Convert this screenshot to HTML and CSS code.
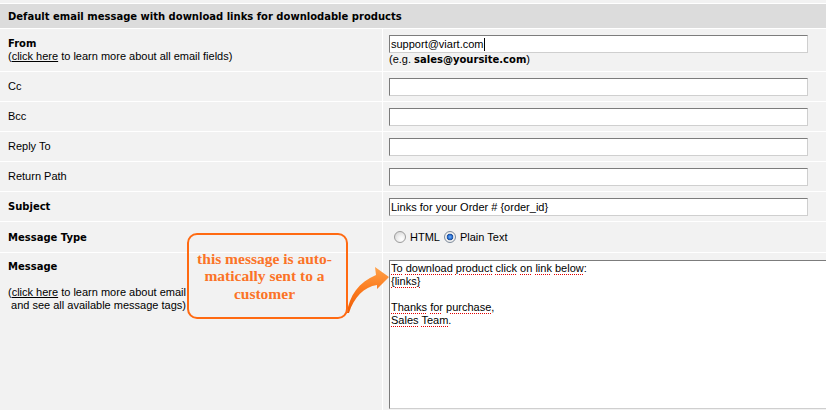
FILE: index.html
```html
<!DOCTYPE html>
<html>
<head>
<meta charset="utf-8">
<title>Download links email</title>
<link rel="stylesheet" href="styles.css">
</head>
<body>
<div class="page">
  <div class="form">
    <div class="strip"></div>
    <div class="head">Default email message with download links for downlodable products</div>

    <div class="lbl"><div><b>From</b><br>(<a href="#">click here</a> to learn more about all email fields)</div></div>
    <div class="val from">
      <div>
        <div class="field">support@viart.com<span class="caret"></span></div>
        <div class="hint">(e.g. <b>sales@yoursite.com</b>)</div>
      </div>
    </div>

    <div class="lbl">Cc</div>
    <div class="val"><input class="field" type="text"></div>

    <div class="lbl">Bcc</div>
    <div class="val"><input class="field" type="text"></div>

    <div class="lbl">Reply To</div>
    <div class="val"><input class="field" type="text"></div>

    <div class="lbl">Return Path</div>
    <div class="val"><input class="field" type="text"></div>

    <div class="lbl"><b>Subject</b></div>
    <div class="val"><input class="field" type="text" value="Links for your Order # {order_id}"></div>

    <div class="lbl tall"><b>Message Type</b></div>
    <div class="val tall">
      <label class="opt"><input class="radio" type="radio" name="mt"> HTML</label>
      <label class="opt"><input class="radio" type="radio" name="mt" checked> Plain Text</label>
    </div>

    <div class="lbl top"><div><b>Message</b><br><br>(<a href="#">click here</a> to learn more about email<br>&nbsp;and see all available message tags)</div></div>
    <div class="val top clip">
      <div class="area"><span class="sp">To</span> <span class="sp">download</span> <span class="sp">product</span> <span class="sp">click</span> <span class="sp">on</span> <span class="sp">link</span> <span class="sp">below</span>:<br><span class="sp">{links}</span><br><br><span class="sp">Thanks</span> <span class="sp">for</span> <span class="sp">purchase</span>,<br><span class="sp">Sales</span> <span class="sp">Team</span>.</div>
    </div>
  </div>

  <div class="callout">this message is auto-<br>matically sent to a<br>customer</div>
  <svg class="arrow" width="55" height="65" viewBox="0 0 55 65">
    <defs>
      <linearGradient id="ag" x1="0" y1="0" x2="0" y2="1">
        <stop offset="0" stop-color="#ffa24a"/>
        <stop offset="0.5" stop-color="#fb7a1e"/>
        <stop offset="1" stop-color="#ee5c06"/>
      </linearGradient>
    </defs>
    <path d="M7 58 C9 41 19 27 36 20 L35 12 L49 22 L37 34 L37 30 C24 32 14 42 9 58 Z" fill="url(#ag)"/>
  </svg>
</div>
</body>
</html>
```

FILE: styles.css
```css
html, body {
  margin: 0;
  padding: 0;
  background: #f2f2f2;
  overflow: hidden;
}

.page {
  position: relative;
  width: 826px;
  height: 410px;
  overflow: hidden;
  font-family: "Liberation Sans", Arial, sans-serif;
  font-size: 11px;
  line-height: 13px;
  color: #000;
}

.page b {
  font-family: "DejaVu Sans", Verdana, sans-serif;
  font-size: 10px;
  font-weight: bold;
}

.page a {
  color: #000;
  text-decoration: underline;
}

.form {
  display: grid;
  grid-template-columns: 382px 1fr;
  gap: 1px;
  background: #fff;
}

.strip {
  grid-column: 1 / 3;
  height: 3px;
  background: #f2f2f2;
}

.head {
  grid-column: 1 / 3;
  height: 24px;
  box-sizing: border-box;
  display: flex;
  align-items: center;
  padding-left: 8px;
  background: #dcdcdc;
  font-family: "DejaVu Sans", Verdana, sans-serif;
  font-size: 10px;
  font-weight: bold;
}

.lbl, .val {
  background: #f2f2f2;
  display: flex;
  align-items: center;
  min-height: 29px;
  box-sizing: border-box;
}

.lbl {
  padding-left: 8px;
}

.val {
  padding-left: 6px;
}

.val.from {
  padding: 6px 0 5px 6px;
}

.tall {
  min-height: 30px;
}

.top {
  align-items: flex-start;
  padding-top: 7px;
  min-height: 160px;
}

.clip {
  overflow: hidden;
  min-width: 0;
}

.field {
  display: block;
  width: 419px;
  height: 18px;
  box-sizing: border-box;
  margin: 0;
  padding: 0 1px;
  border: 1px solid;
  border-color: #7c7c7c #cfcfcf #cfcfcf #7c7c7c;
  background: #fff;
  font-family: "Liberation Sans", Arial, sans-serif;
  font-size: 11px;
  line-height: 16px;
  color: #000;
  outline: none;
}

.caret {
  display: inline-block;
  width: 1px;
  height: 13px;
  margin-left: 1px;
  background: #000;
  vertical-align: -3px;
}

.opt {
  display: inline-flex;
  align-items: center;
}

.radio {
  appearance: none;
  -webkit-appearance: none;
  width: 12px;
  height: 12px;
  margin: 0 4px 0 5px;
  border-radius: 50%;
  border: 1px solid #9c9c9c;
  background: radial-gradient(circle at 65% 70%, #ffffff 0, #f2f2f2 35%, #cfcfcf 100%);
  box-sizing: border-box;
}

.radio:checked {
  border-color: #7f8c9c;
  background: radial-gradient(circle at 50% 50%, #6fb3ff 0, #2b6fd0 2px, #1f4f9a 3px, #e6e6e6 3.6px, #f4f4f4 60%, #cfcfcf 100%);
}

.opt + .opt .radio {
  margin-left: 4px;
}

.area {
  width: 460px;
  height: 149px;
  box-sizing: border-box;
  padding: 1px;
  border: 1px solid;
  border-color: #7c7c7c #cfcfcf #cfcfcf #7c7c7c;
  background: #fff;
  line-height: 13px;
  flex: none;
}

.sp {
  text-decoration: underline dotted #e00000;
  text-decoration-thickness: 1px;
  text-underline-offset: 2px;
}

.callout {
  position: absolute;
  left: 187px;
  top: 233px;
  width: 161px;
  height: 86px;
  box-sizing: border-box;
  border: 2px solid #ff6a12;
  border-radius: 10px;
  display: flex;
  align-items: center;
  justify-content: center;
  text-align: center;
  font-family: "Liberation Serif", "Times New Roman", serif;
  font-size: 15.5px;
  font-weight: bold;
  line-height: 17.5px;
  color: #fb7327;
  padding-right: 6px;
}

.arrow {
  position: absolute;
  left: 340px;
  top: 255px;
}
```
